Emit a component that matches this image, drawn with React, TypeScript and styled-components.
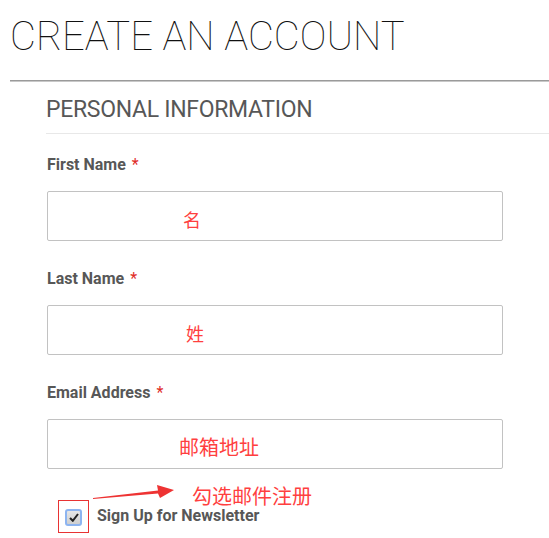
import React from 'react';
import styled, { createGlobalStyle } from 'styled-components';

const GlobalStyle = createGlobalStyle`
  body {
    margin: 0;
    background: #fff;
    font-family: Roboto, "Liberation Sans", "Noto Sans CJK SC", sans-serif;
  }
`;

const Page = styled.div`
  padding-left: 10px;
  width: 539px;
  height: 538px;
  overflow: hidden;
`;

const PageTitle = styled.h1`
  margin: 0 0 19px;
  padding: 13px 0 0 0;
  font-weight: 100;
  font-size: 40px;
  line-height: 48px;
  color: #111;
`;

const Rule = styled.div`
  height: 1px;
  background: #9a9a9a;
  border-bottom: 1px solid #c8c8c8;
`;

const Section = styled.div`
  margin-left: 37px;
  padding-top: 13px;
`;

const Legend = styled.div`
  font-size: 23px;
  line-height: 30px;
  letter-spacing: -0.3px;
  color: #575757;
  padding-bottom: 8px;
  border-bottom: 1px solid #e8e8e8;
  margin-left: -1px;
`;

const Fields = styled.div`
  padding-top: 21px;
  display: flex;
  flex-direction: column;
  gap: 28px;
`;

const Field = styled.div`
  display: flex;
  flex-direction: column;
  gap: 16px;
`;

const Label = styled.div`
  font-weight: 700;
  font-size: 16px;
  line-height: 20px;
  color: #575757;
  span {
    color: #e02b27;
    font-weight: 400;
    font-size: 16px;
    margin-left: 6px;
  }
`;

const InputBox = styled.div<{ $indent: number; $size: number }>`
  box-sizing: border-box;
  width: 456px;
  height: 50px;
  border: 1px solid #c2c2c2;
  border-radius: 2px;
  display: flex;
  align-items: center;
  padding-left: ${(p) => p.$indent}px;
  padding-top: 5px;
  font-family: "Noto Sans CJK SC", sans-serif;
  font-size: ${(p) => p.$size}px;
  color: #ff3f3f;
`;

const Newsletter = styled.div`
  position: relative;
  margin-top: 31px;
  padding-left: 11px;
  display: flex;
  align-items: center;
`;

const Marker = styled.div`
  box-sizing: border-box;
  width: 31px;
  height: 33px;
  border: 1px solid #e83333;
  display: flex;
  align-items: center;
  justify-content: center;
  padding-top: 2px;
`;

const CheckBox = styled.div`
  box-sizing: border-box;
  width: 17px;
  height: 17px;
  border: 2px solid #8db4f0;
  border-radius: 3px;
  background: linear-gradient(#e6e6e6, #cfcfcf);
  display: flex;
  align-items: center;
  justify-content: center;
`;

const NewsletterLabel = styled.div`
  margin-left: 8px;
  font-weight: 700;
  font-size: 16px;
  color: #575757;
  margin-top: -3px;
`;

const Arrow = styled.svg`
  position: absolute;
  left: 43px;
  top: -17px;
`;

const Hint = styled.div`
  position: absolute;
  left: 145px;
  top: -16px;
  font-family: "Noto Sans CJK SC", sans-serif;
  font-size: 20px;
  line-height: 24px;
  color: #ff3f3f;
`;

const fields = [
  { label: 'First Name', note: '名', indent: 135, size: 18 },
  { label: 'Last Name', note: '姓', indent: 138, size: 18 },
  { label: 'Email Address', note: '邮箱地址', indent: 131, size: 20 },
];

const App = () => (
  <Page>
    <GlobalStyle />
    <PageTitle>CREATE AN ACCOUNT</PageTitle>
    <Rule />
    <Section>
      <Legend>PERSONAL INFORMATION</Legend>
      <Fields>
        {fields.map((f) => (
          <Field key={f.label}>
            <Label>
              {f.label}
              <span>*</span>
            </Label>
            <InputBox $indent={f.indent} $size={f.size}>
              {f.note}
            </InputBox>
          </Field>
        ))}
      </Fields>
      <Newsletter>
        <Marker>
          <CheckBox>
            <svg width="10" height="9" viewBox="0 0 10 9">
              <path d="M1 5 L3.8 7.8 L9 1" fill="none" stroke="#222" strokeWidth="2" />
            </svg>
          </CheckBox>
        </Marker>
        <NewsletterLabel>Sign Up for Newsletter</NewsletterLabel>
        <Arrow width="86" height="18" viewBox="0 0 86 18">
          <polygon points="3,15 68,7.5 67,2 84,7 70,15 68,10.5 3,16" fill="#ee3333" />
        </Arrow>
        <Hint>勾选邮件注册</Hint>
      </Newsletter>
    </Section>
  </Page>
);

export default App;
